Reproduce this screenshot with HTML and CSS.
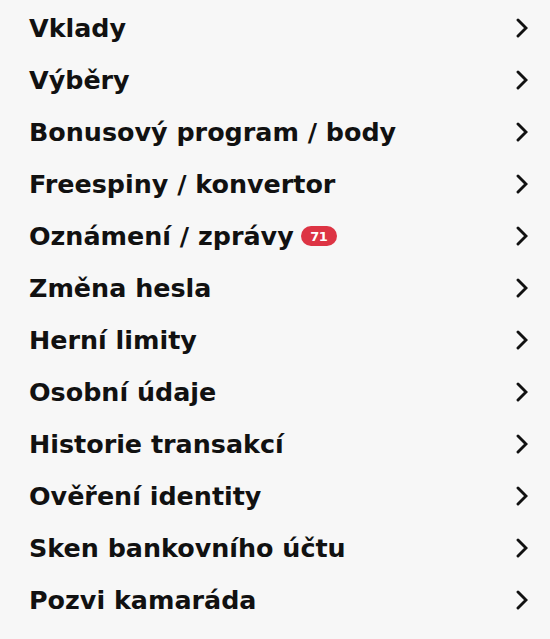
FILE: index.html
```html
<!DOCTYPE html>
<html lang="cs">
<head>
<meta charset="utf-8">
<title>Menu</title>
<link rel="stylesheet" href="styles.css">
</head>
<body>
<nav class="menu">
  <a class="item" href="#"><span class="label">Vklady</span><svg class="chev" viewBox="0 0 12 20"><polyline points="2,2 10,10 2,18"/></svg></a>
  <a class="item" href="#"><span class="label">Výběry</span><svg class="chev" viewBox="0 0 12 20"><polyline points="2,2 10,10 2,18"/></svg></a>
  <a class="item" href="#"><span class="label">Bonusový program / body</span><svg class="chev" viewBox="0 0 12 20"><polyline points="2,2 10,10 2,18"/></svg></a>
  <a class="item" href="#"><span class="label">Freespiny / konvertor</span><svg class="chev" viewBox="0 0 12 20"><polyline points="2,2 10,10 2,18"/></svg></a>
  <a class="item" href="#"><span class="label">Oznámení / zprávy</span><span class="badge">71</span><svg class="chev" viewBox="0 0 12 20"><polyline points="2,2 10,10 2,18"/></svg></a>
  <a class="item" href="#"><span class="label">Změna hesla</span><svg class="chev" viewBox="0 0 12 20"><polyline points="2,2 10,10 2,18"/></svg></a>
  <a class="item" href="#"><span class="label">Herní limity</span><svg class="chev" viewBox="0 0 12 20"><polyline points="2,2 10,10 2,18"/></svg></a>
  <a class="item" href="#"><span class="label">Osobní údaje</span><svg class="chev" viewBox="0 0 12 20"><polyline points="2,2 10,10 2,18"/></svg></a>
  <a class="item" href="#"><span class="label">Historie transakcí</span><svg class="chev" viewBox="0 0 12 20"><polyline points="2,2 10,10 2,18"/></svg></a>
  <a class="item" href="#"><span class="label">Ověření identity</span><svg class="chev" viewBox="0 0 12 20"><polyline points="2,2 10,10 2,18"/></svg></a>
  <a class="item" href="#"><span class="label">Sken bankovního účtu</span><svg class="chev" viewBox="0 0 12 20"><polyline points="2,2 10,10 2,18"/></svg></a>
  <a class="item" href="#"><span class="label">Pozvi kamaráda</span><svg class="chev" viewBox="0 0 12 20"><polyline points="2,2 10,10 2,18"/></svg></a>
</nav>
</body>
</html>
```

FILE: styles.css
```css
html, body {
  margin: 0;
  padding: 0;
  background: #f7f7f7;
}

body {
  font-family: "DejaVu Sans", "Liberation Sans", sans-serif;
  color: #111;
}

.menu {
  display: flex;
  flex-direction: column;
  padding: 2px 22px 0 29px;
}

.item {
  display: flex;
  align-items: center;
  height: 52px;
  color: #111;
  text-decoration: none;
}

.label {
  font-size: 25.4px;
  font-weight: 700;
  white-space: nowrap;
}

.badge {
  display: inline-flex;
  align-items: center;
  justify-content: center;
  margin-left: 7px;
  width: 36px;
  height: 20px;
  border-radius: 10px;
  background: #dd3444;
  color: #fff;
  font-size: 13px;
  font-weight: 700;
  letter-spacing: -0.5px;
  line-height: 1;
}

.chev {
  margin-left: auto;
  width: 12px;
  height: 20px;
  flex: none;
}

.chev polyline {
  fill: none;
  stroke: #111;
  stroke-width: 2.9;
  stroke-linecap: round;
  stroke-linejoin: miter;
}
```
